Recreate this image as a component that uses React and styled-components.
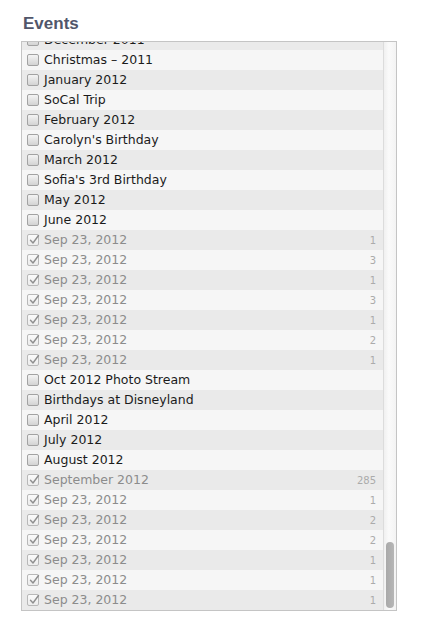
import React from "react";
import styled, { createGlobalStyle } from "styled-components";

const Global = createGlobalStyle`
  html, body { margin: 0; padding: 0; background: #ffffff; }
  body { font-family: "DejaVu Sans", "Liberation Sans", sans-serif; }
`;

const Page = styled.div`
  width: 435px;
  height: 635px;
  padding: 15px 0 0 21px;
  box-sizing: border-box;
`;

const Title = styled.h2`
  margin: 0 0 8px 2px;
  font-family: "Liberation Sans", Arial, sans-serif;
  font-weight: bold;
  font-size: 17px;
  line-height: 18px;
  color: #51566a;
`;

const Box = styled.div`
  width: 376px;
  height: 570px;
  box-sizing: border-box;
  border: 1px solid #c4c4c4;
  display: flex;
  overflow: hidden;
  background: #f6f6f6;
`;

const ListViewport = styled.div`
  flex: 1;
  overflow: hidden;
`;

const List = styled.div`
  margin-top: -12px;
  display: flex;
  flex-direction: column;
`;

const Row = styled.div`
  height: 20px;
  display: flex;
  align-items: center;
  padding: 0 7px 0 5px;
  background: ${(p) => (p.$dark ? "#eaeaea" : "#f6f6f6")};
`;

const Check = styled.span`
  width: 12px;
  height: 12px;
  box-sizing: border-box;
  flex: none;
  border-radius: 2px;
  border: 1px solid ${(p) => (p.$checked ? "#b8b8b8" : "#a2a2a2")};
  background: ${(p) =>
    p.$checked
      ? "linear-gradient(#fbfbfb, #ececec)"
      : "linear-gradient(#f4f4f4, #d3d3d3)"};
  position: relative;
`;

const Label = styled.span`
  margin-left: 5px;
  flex: 1;
  font-size: 12.5px;
  line-height: 20px;
  color: ${(p) => (p.$dim ? "#8c8c8c" : "#1b1b1b")};
  white-space: nowrap;
`;

const Count = styled.span`
  font-size: 10px;
  color: #ababab;
`;

const Track = styled.div`
  width: 13px;
  flex: none;
  border-left: 1px solid #dcdcdc;
  background: linear-gradient(90deg, #f0f0f0, #fafafa 40%, #f3f3f3);
  display: flex;
  flex-direction: column;
  justify-content: flex-end;
  padding: 0 0 2px 2px;
  box-sizing: border-box;
`;

const Thumb = styled.div`
  width: 8px;
  height: 66px;
  border-radius: 4px;
  background: linear-gradient(90deg, #a9a9a9, #b6b6b6);
`;

const Tick = () => (
  <svg width="12" height="12" viewBox="0 0 12 12" style={{ position: "absolute", left: 0, top: -1 }}>
    <path d="M2.5 6.2 L5 9 L10.5 1.5" fill="none" stroke="#8f8f8f" strokeWidth="1.4" strokeLinecap="round" strokeLinejoin="round" />
  </svg>
);

const rows = [
  { t: "December 2011" },
  { t: "Christmas – 2011" },
  { t: "January 2012" },
  { t: "SoCal Trip" },
  { t: "February 2012" },
  { t: "Carolyn's Birthday" },
  { t: "March 2012" },
  { t: "Sofia's 3rd Birthday" },
  { t: "May 2012" },
  { t: "June 2012" },
  { t: "Sep 23, 2012", c: 1 },
  { t: "Sep 23, 2012", c: 3 },
  { t: "Sep 23, 2012", c: 1 },
  { t: "Sep 23, 2012", c: 3 },
  { t: "Sep 23, 2012", c: 1 },
  { t: "Sep 23, 2012", c: 2 },
  { t: "Sep 23, 2012", c: 1 },
  { t: "Oct 2012 Photo Stream" },
  { t: "Birthdays at Disneyland" },
  { t: "April 2012" },
  { t: "July 2012" },
  { t: "August 2012" },
  { t: "September 2012", c: 285 },
  { t: "Sep 23, 2012", c: 1 },
  { t: "Sep 23, 2012", c: 2 },
  { t: "Sep 23, 2012", c: 2 },
  { t: "Sep 23, 2012", c: 1 },
  { t: "Sep 23, 2012", c: 1 },
  { t: "Sep 23, 2012", c: 1 },
];

export default function App() {
  return (
    <>
      <Global />
      <Page>
        <Title>Events</Title>
        <Box>
          <ListViewport>
            <List>
              {rows.map((r, i) => {
                const checked = r.c != null;
                return (
                  <Row key={i} $dark={i % 2 === 0}>
                    <Check $checked={checked}>{checked && <Tick />}</Check>
                    <Label $dim={checked}>{r.t}</Label>
                    {checked && <Count>{r.c}</Count>}
                  </Row>
                );
              })}
            </List>
          </ListViewport>
          <Track>
            <Thumb />
          </Track>
        </Box>
      </Page>
    </>
  );
}
